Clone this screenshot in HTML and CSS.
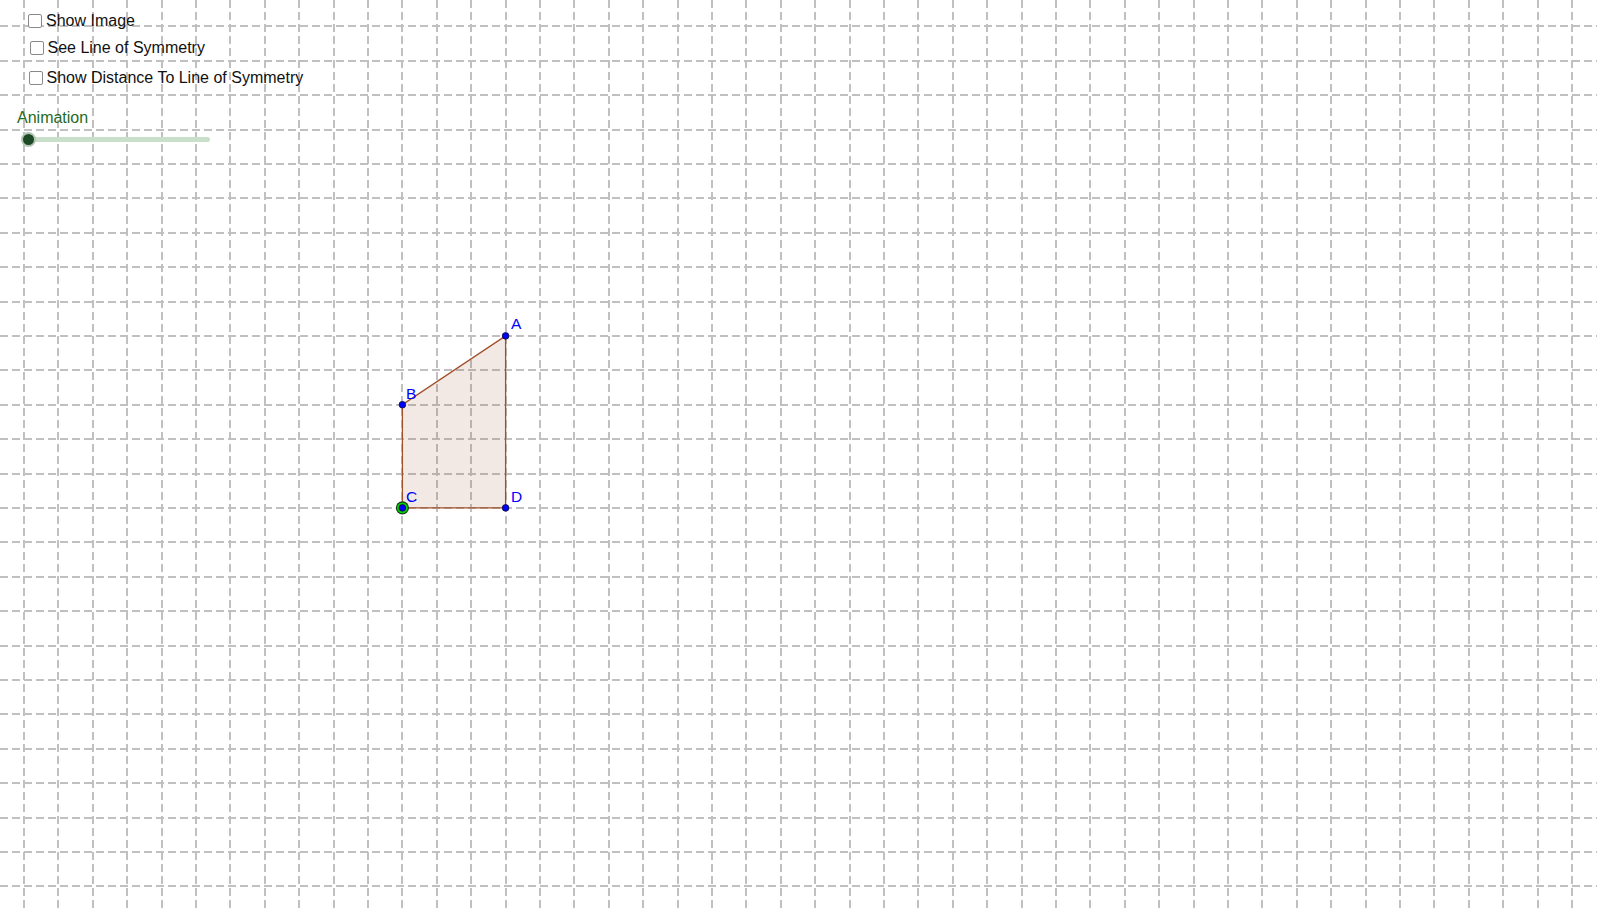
FILE: index.html
```html
<!DOCTYPE html>
<html>
<head>
<meta charset="utf-8">
<link rel="stylesheet" href="styles.css">
</head>
<body>
<div class="applet">
  <svg class="canvas" width="1597" height="911" viewBox="0 0 1597 911">
    <path class="grid" d="M24 0V911M58 0V911M93 0V911M127 0V911M162 0V911M196 0V911M230 0V911M265 0V911M299 0V911M334 0V911M368 0V911M402 0V911M437 0V911M471 0V911M506 0V911M540 0V911M574 0V911M609 0V911M643 0V911M678 0V911M712 0V911M746 0V911M781 0V911M815 0V911M850 0V911M884 0V911M918 0V911M953 0V911M987 0V911M1022 0V911M1056 0V911M1090 0V911M1125 0V911M1159 0V911M1194 0V911M1228 0V911M1262 0V911M1297 0V911M1331 0V911M1366 0V911M1400 0V911M1434 0V911M1469 0V911M1503 0V911M1538 0V911M1572 0V911"/>
    <path class="grid" d="M0 26H1597M0 61H1597M0 95H1597M0 130H1597M0 164H1597M0 198H1597M0 233H1597M0 267H1597M0 302H1597M0 336H1597M0 370H1597M0 405H1597M0 439H1597M0 474H1597M0 508H1597M0 542H1597M0 577H1597M0 611H1597M0 646H1597M0 680H1597M0 714H1597M0 749H1597M0 783H1597M0 818H1597M0 852H1597M0 886H1597"/>
    <polygon class="poly" points="505.6,335.9 402.4,404.7 402.4,507.9 505.6,507.9"/>
    <circle class="ring-out" cx="402.4" cy="507.9" r="6.6"/>
    <circle class="ring-in" cx="402.4" cy="507.9" r="5.4"/>
    <circle class="pt" cx="505.6" cy="335.9" r="3.3"/>
    <circle class="pt" cx="402.4" cy="404.7" r="3.3"/>
    <circle class="pt" cx="402.4" cy="507.9" r="3.3"/>
    <circle class="pt" cx="505.6" cy="507.9" r="3.3"/>
    <text class="lbl" x="511" y="329">A</text>
    <text class="lbl" x="406" y="399">B</text>
    <text class="lbl" x="406" y="502">C</text>
    <text class="lbl" x="511" y="502">D</text>
  </svg>
  <div class="panel">
    <label class="row row1"><span class="box"></span><span class="txt">Show Image</span></label>
    <label class="row row2"><span class="box"></span><span class="txt">See Line of Symmetry</span></label>
    <label class="row row3"><span class="box"></span><span class="txt">Show Distance To Line of Symmetry</span></label>
    <div class="slider">
      <div class="slider-label">Animation</div>
      <div class="track"><span class="knob"></span></div>
    </div>
  </div>
</div>
</body>
</html>
```
FILE: styles.css
```css
html, body {
  margin: 0;
  padding: 0;
  background: #ffffff;
}
body {
  font-family: "Liberation Sans", Arial, sans-serif;
  width: 1600px;
  height: 913px;
  overflow: hidden;
}
.applet {
  position: relative;
  width: 1597px;
  height: 911px;
}
.canvas {
  display: block;
}
.grid {
  fill: none;
  stroke: #c0c0c0;
  stroke-width: 2;
  stroke-dasharray: 8 4;
  shape-rendering: crispEdges;
}
.poly {
  fill: rgba(160, 82, 45, 0.13);
  stroke: #a0522d;
  stroke-width: 1.3;
}
.ring-out {
  fill: #1a3a1a;
}
.ring-in {
  fill: #00d400;
}
.pt {
  fill: #0000ff;
  stroke: #101040;
  stroke-width: 0.9;
}
.lbl {
  font-family: "Liberation Sans", Arial, sans-serif;
  font-size: 15.5px;
  fill: #0000ff;
}
.panel {
  position: absolute;
  left: 0;
  top: 0;
  display: flex;
  flex-direction: column;
}
.row {
  display: flex;
  align-items: center;
  height: 20px;
  font-size: 16px;
  line-height: 20px;
  color: #111;
  padding-left: 28px;
}
.row1 { margin-top: 11px; }
.row2 { margin-top: 7px; padding-left: 29.5px; }
.row3 { margin-top: 10px; padding-left: 28.5px; }
.box {
  width: 12px;
  height: 12px;
  border: 1px solid #8a8a8a;
  border-radius: 2px;
  background: #fff;
  margin-right: 4px;
  flex: none;
}
.slider {
  margin-top: 20px;
  padding-left: 17px;
}
.slider-label {
  font-size: 16px;
  line-height: 20px;
  color: #1f6b1f;
}
.track {
  position: relative;
  margin-top: 9px;
  margin-left: 11px;
  width: 182px;
  height: 5px;
  border-radius: 3px;
  background: #c9dfc9;
}
.knob {
  position: absolute;
  left: -7px;
  top: -5px;
  width: 11px;
  height: 11px;
  border-radius: 50%;
  background: #1c4a24;
  border: 2px solid #b4c4b4;
}
```
